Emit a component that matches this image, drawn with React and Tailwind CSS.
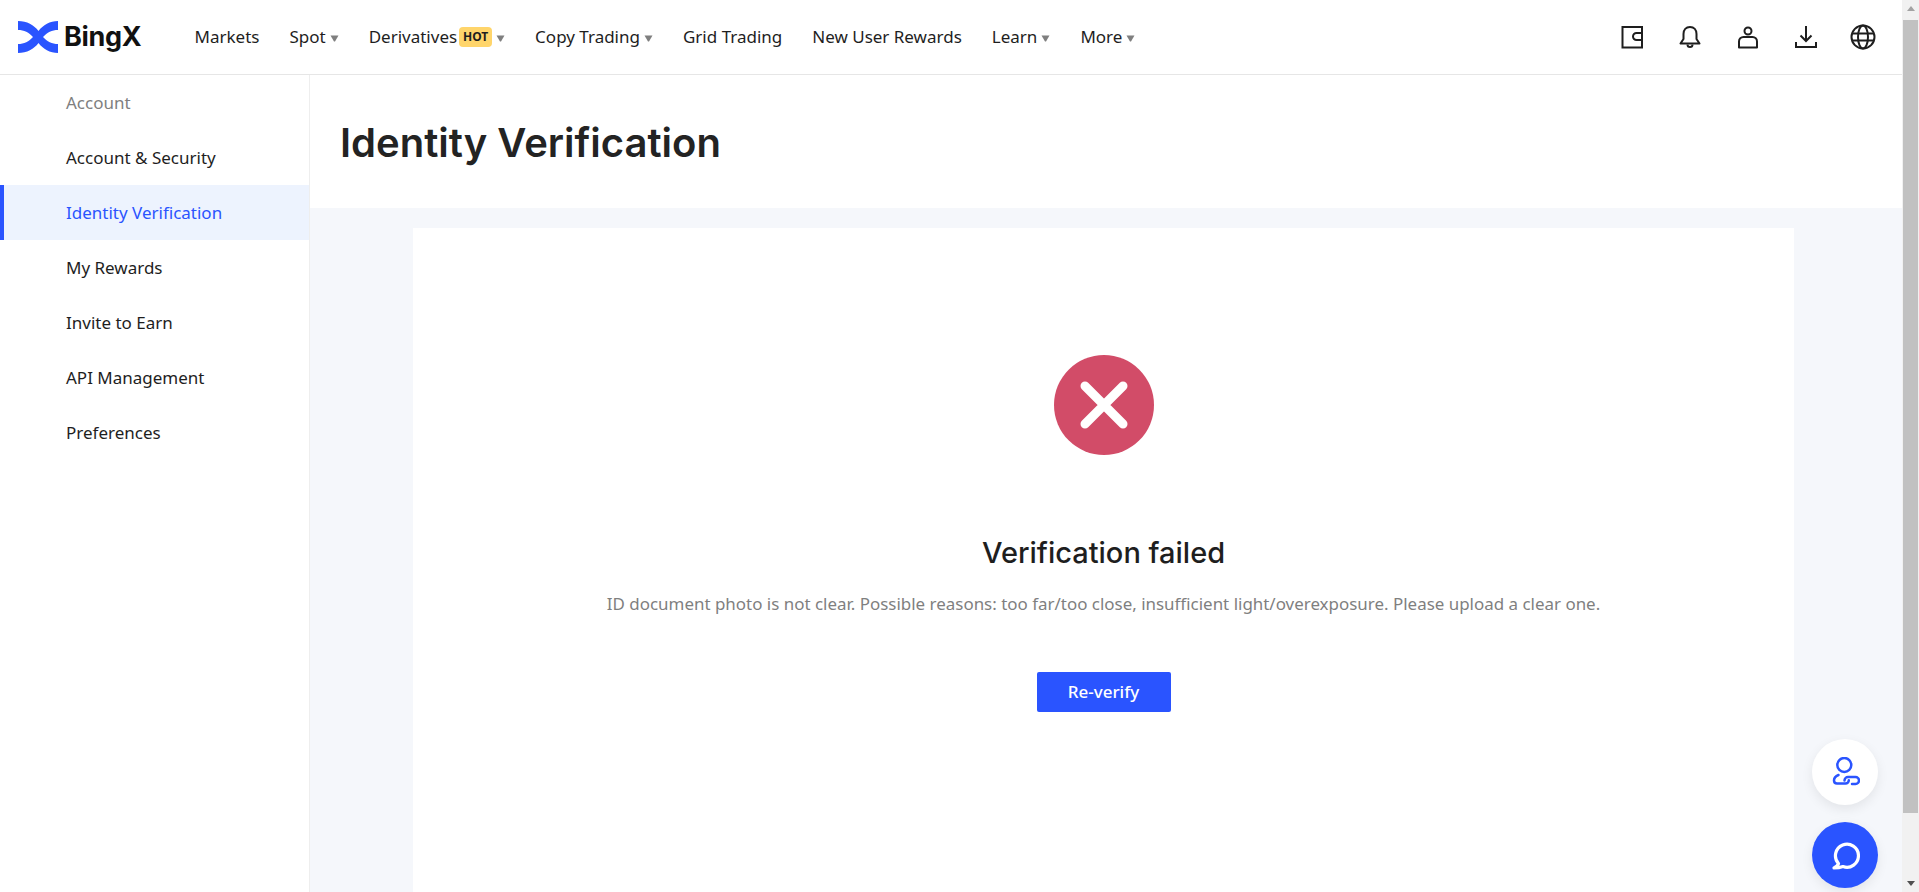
import React from 'react';

const navItems = [
  { label: 'Markets' },
  { label: 'Spot', caret: true },
  { label: 'Derivatives', caret: true, hot: true },
  { label: 'Copy Trading', caret: true },
  { label: 'Grid Trading' },
  { label: 'New User Rewards' },
  { label: 'Learn', caret: true },
  { label: 'More', caret: true },
];

const sideItems = ['Account & Security', 'Identity Verification', 'My Rewards', 'Invite to Earn', 'API Management', 'Preferences'];

const Logo = () => (
  <svg width="41" height="32" viewBox="0 0 41 32" className="shrink-0">
    <path d="M0 0c9 0 16 4 20.500 10C25 4 32 0 40 0v9c-6 0-11 2.500-15 7 4 4.500 9 7 15 7v9c-8 0-15-4-19.500-10C16 28 9 32 0 32v-9c6 0 11-2.500 15-7-4-4.500-9-7-15-7z" fill="#2a54ff" />
  </svg>
);

const Caret = () => (
  <svg width="9" height="7" viewBox="0 0 9 7" className="ml-[4px] mt-[2px]">
    <path d="M0.500 0.500h8L5 6.500H4z" fill="#7f7f7f" />
  </svg>
);

const WalletIcon = () => (
  <svg width="24" height="24" viewBox="0 0 24 24" fill="none" stroke="#1e1e1e" strokeWidth="2">
    <path d="M2.500 2h19.500v20.500H2.500z" />
    <path d="M22 8h-5.500a3.500 3.500 0 0 0 0 7H22" />
  </svg>
);

const BellIcon = () => (
  <svg width="24" height="24" viewBox="0 0 24 24" fill="none" stroke="#1e1e1e" strokeWidth="2" strokeLinejoin="round">
    <path d="M12 2c-4 0-6.500 3-6.500 7v5l-3 4.500h19l-3-4.500V9c0-4-2.500-7-6.500-7z" />
    <path d="M9.500 19.500a2.500 2.500 0 0 0 5 0" />
  </svg>
);

const UserIcon = () => (
  <svg width="24" height="24" viewBox="0 0 24 24" fill="none" stroke="#1e1e1e" strokeWidth="2" strokeLinejoin="round">
    <circle cx="12" cy="6" r="3.500" />
    <path d="M3 22.500v-6c0-2.500 2-4.500 4.500-4.500h9c2.500 0 4.500 2 4.500 4.500v6z" />
  </svg>
);

const DownloadIcon = () => (
  <svg width="24" height="24" viewBox="0 0 24 24" fill="none" stroke="#1e1e1e" strokeWidth="2">
    <path d="M12 1v15M6.500 10.500l5.500 5.500 5.500-5.500" />
    <path d="M2 17v5h20v-5" />
  </svg>
);

const GlobeIcon = () => (
  <svg width="26" height="26" viewBox="0 0 26 26" fill="none" stroke="#1e1e1e" strokeWidth="2" className="-ml-[2px]">
    <circle cx="13" cy="13" r="11.500" />
    <ellipse cx="13" cy="13" rx="5" ry="11.500" />
    <path d="M2 9.500h22M2 16.500h22" />
  </svg>
);

const App = () => {
  return (
    <div className="h-[892px] w-full flex overflow-hidden bg-white text-[#1e1e1e] font-['Noto_Sans',sans-serif]">
      <div className="flex-1 min-w-0 flex flex-col relative">
        {/* top bar */}
        <header className="h-[75px] shrink-0 flex items-center border-b border-[#e6e6e6] pl-[18px] pr-[26px]">
          <Logo />
          <span className="ml-[5px] mr-[53px] text-[27px] font-bold tracking-[-0.3px] text-[#111] font-['Inter',sans-serif]">BingX</span>
          <nav className="flex items-center gap-[30px] text-[17px]">
            {navItems.map((item) => (
              <a key={item.label} className="flex items-center whitespace-nowrap">
                {item.label}
                {item.hot && (
                  <span className="ml-[2px] w-[33px] text-center h-[20px] leading-[20px] rounded-[4px] bg-[#ffd56b] text-[12px] font-bold text-[#1e1e1e]">HOT</span>
                )}
                {item.caret && <Caret />}
              </a>
            ))}
          </nav>
          <div className="ml-auto flex items-center gap-[34px]">
            <WalletIcon />
            <BellIcon />
            <UserIcon />
            <DownloadIcon />
            <GlobeIcon />
          </div>
        </header>

        <div className="flex-1 min-h-0 flex">
          {/* sidebar */}
          <aside className="w-[310px] shrink-0 border-r border-[#eeeeee] text-[17px]">
            <div className="h-[55px] pl-[66px] flex items-center text-[#7f7f7f]">Account</div>
            {sideItems.map((item) =>
              item === 'Identity Verification' ? (
                <div key={item} className="h-[55px] pl-[62px] flex items-center border-l-4 border-[#2a54ff] bg-[#edf3fe] text-[#2a54ff]">
                  {item}
                </div>
              ) : (
                <div key={item} className="h-[55px] pl-[66px] flex items-center">{item}</div>
              )
            )}
          </aside>

          {/* main */}
          <main className="flex-1 min-w-0 flex flex-col">
            <div className="h-[133px] shrink-0 pl-[30px] pt-[38px]">
              <h1 className="text-[40px] leading-[60px] font-semibold text-[#232323] font-['Inter',sans-serif]">Identity Verification</h1>
            </div>
            <div className="flex-1 min-h-0 bg-[#f5f7fb] pt-[20px] pl-[103px] pr-[108px]">
              <section className="h-full bg-white flex flex-col items-center pt-[127px]">
                <svg width="100" height="100" viewBox="0 0 100 100">
                  <circle cx="50" cy="50" r="50" fill="#d24c68" />
                  <path d="M31 31l38 38M69 31L31 69" stroke="#fff" strokeWidth="9" strokeLinecap="round" />
                </svg>
                <h2 className="mt-[78px] text-[29px] leading-[40px] font-medium font-['Inter',sans-serif]">Verification failed</h2>
                <p className="mt-[19px] text-[16.950px] leading-[24px] text-[#7f7f7f]">
                  ID document photo is not clear. Possible reasons: too far/too close, insufficient light/overexposure. Please upload a clear one.
                </p>
                <button className="mt-[56px] w-[134px] h-[40px] rounded-[2px] bg-[#2a54ff] text-white text-[17px] font-medium">Re-verify</button>
              </section>
            </div>
          </main>
        </div>

        {/* floating buttons */}
        <div className="absolute right-[24px] top-[739px] flex flex-col gap-[17px]">
          <div className="w-[66px] h-[66px] rounded-full bg-white shadow-[0_4px_12px_rgba(0,0,0,0.08)] flex items-center justify-center">
            <svg width="30" height="30" viewBox="0 0 30 30" fill="none" stroke="#2a54ff" strokeWidth="2.500" strokeLinecap="round">
              <circle cx="14.300" cy="8" r="7" />
              <path d="M8.500 18c-2.500 1-4.500 3-4.500 5.500 0 1.800 1.300 3 3 3h8.500a3.300 3.300 0 0 0 3.300-3.300" />
              <path d="M14.500 23.500a3.500 3.500 0 0 1 3.500-3.500h7.500a3.500 3.500 0 0 1 0 7H22" />
            </svg>
          </div>
          <div className="w-[66px] h-[66px] rounded-full bg-[#2a54ff] shadow-[0_4px_12px_rgba(0,0,0,0.08)] flex items-center justify-center">
            <svg width="30" height="30" viewBox="0 0 30 30" fill="none" stroke="#fff" strokeWidth="3.200" strokeLinejoin="round">
              <path d="M8.500 23.500A11.500 11.500 0 1 1 13 26.500C10.500 27.500 7 28 4 28 6 27 8 25.500 8.500 23.500z" />
            </svg>
          </div>
        </div>
      </div>

      {/* scrollbar */}
      <div className="w-[17px] shrink-0 bg-[#f1f1f1] flex flex-col items-center">
        <div className="h-[17px] flex items-center justify-center">
          <div className="w-0 h-0 border-x-[4px] border-x-transparent border-b-[5px] border-b-[#a3a3a3]" />
        </div>
        <div className="mt-[3px] w-[15px] h-[793px] bg-[#c1c1c1]" />
        <div className="mt-auto h-[17px] flex items-center justify-center">
          <div className="w-0 h-0 border-x-[4px] border-x-transparent border-t-[5px] border-t-[#505050]" />
        </div>
      </div>
    </div>
  );
};

export default App;
